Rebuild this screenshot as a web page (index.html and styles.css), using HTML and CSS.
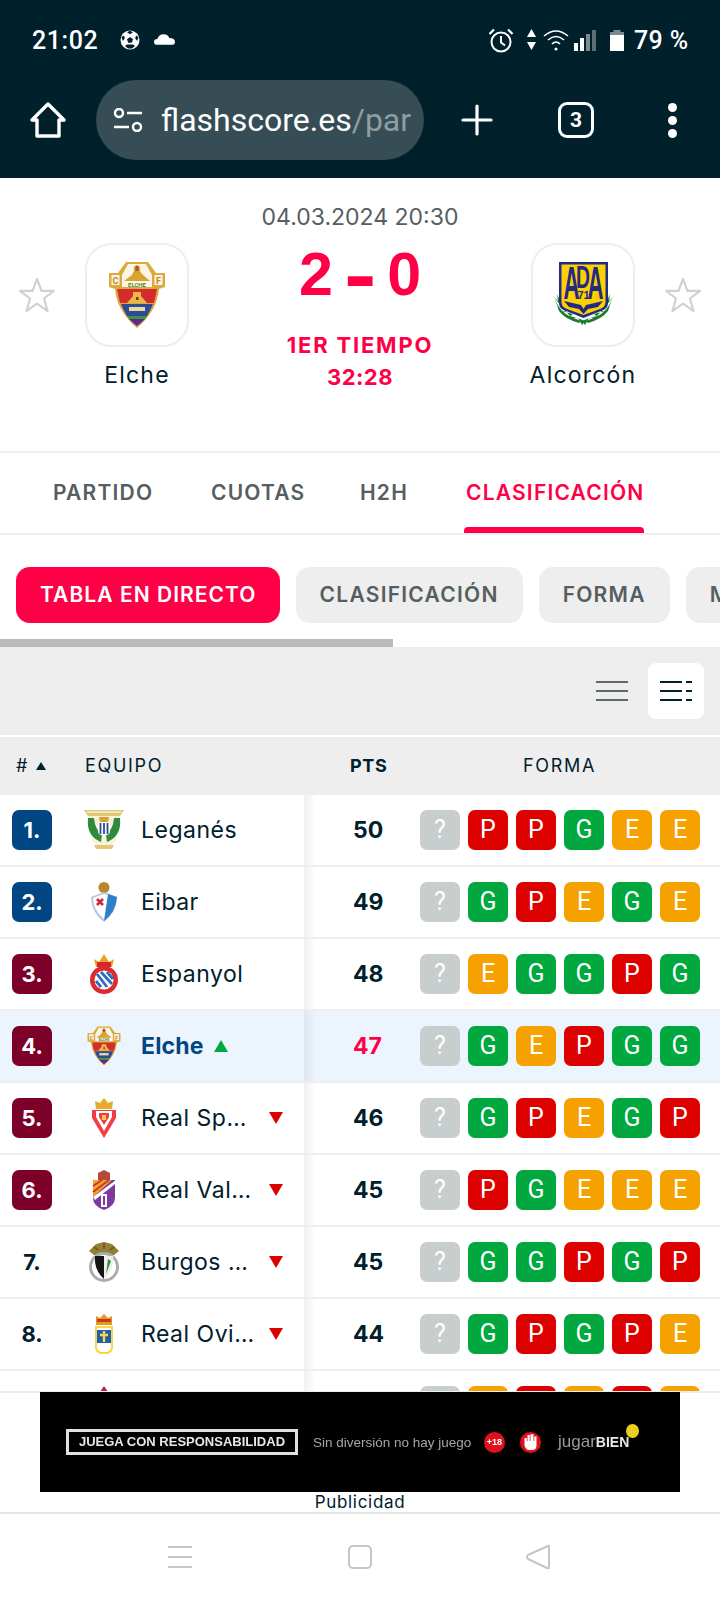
FILE: index.html
```html
<!DOCTYPE html>
<html lang="es">
<head>
<meta charset="utf-8">
<title>Elche - Alcorcón</title>
<link rel="stylesheet" href="styles.css">
</head>
<body>
<svg class="defs" aria-hidden="true">
  <symbol id="elche" viewBox="0 0 56 68">
    <path d="M17 1H39L47 12H56V26L50 28Q48 50 28 67Q8 50 6 28L0 26V12H9Z" fill="#dcaa3c"/>
    <path d="M19 3H37L43 14V26H13V14Z" fill="#fbf6e2"/>
    <rect x="2.500" y="14" width="8" height="10" fill="#fbf6e2"/>
    <rect x="45.500" y="14" width="8" height="10" fill="#fbf6e2"/>
    <path d="M28 4Q32 5 31 10L33 13L41 20H15L23 14L25 10Q24 5 28 4Z" fill="#d9a233"/>
    <path d="M26.500 5h3v5h-3z" fill="#b5502a"/>
    <text x="28" y="26" class="cr-elche">ELCHE</text>
    <text x="6.500" y="23" class="cr-cf">C</text>
    <text x="49.500" y="23" class="cr-cf">F</text>
    <path d="M8 28H48L45 42H11Z" fill="#d62b2c"/>
    <path d="M18 42L24 35V31H32V35L38 42Z" fill="#e8b949"/>
    <path d="M27 36h2.500v3H27z" fill="#a32020"/>
    <path d="M12 43H44Q41 50 38 55H18Q15 50 12 43Z" fill="#2b4c94"/>
    <path d="M20 50V46H36V50Z" fill="#ecd9a0"/>
    <path d="M18 55H38L36 58H20Z" fill="#3f8f46"/>
    <path d="M20 58H36Q32 62 28 65Q24 62 20 58Z" fill="#5a2a8f"/>
  </symbol>
  <symbol id="ada" viewBox="0 0 65 68">
    <path d="M2 35L7 40L6 33L10 42L14 46L20 50L11 50L22 53L17 57L27 57L31 64L34 60L29 58L19 55L11 46Z" fill="#1d7a2a"/>
    <path d="M63 35L58 40L59 33L55 42L51 46L45 50L54 50L43 53L48 57L38 57L34 64L31 60L36 58L46 55L54 46Z" fill="#1d7a2a"/>
    <path d="M4 38Q8 50 20 56L30 60L28 62Q14 58 8 50Z" fill="#1d7a2a"/>
    <path d="M61 38Q57 50 45 56L35 60L37 62Q51 58 57 50Z" fill="#1d7a2a"/>
    <path d="M8 1H57V42Q57 48 50 50L32.500 57L15 50Q8 48 8 42Z" fill="#232a82"/>
    <path d="M10.500 3.500H54.500V41Q54.500 46 49 48L32.500 54L16 48Q10.500 46 10.500 41Z" fill="#fdd000"/>
    <text x="12.500" y="38" class="cr-ada" textLength="16" lengthAdjust="spacingAndGlyphs">A</text>
    <text x="25" y="27" class="cr-ada cr-ada-d" textLength="14" lengthAdjust="spacingAndGlyphs">D</text>
    <text x="36.500" y="38" class="cr-ada" textLength="16" lengthAdjust="spacingAndGlyphs">A</text>
    <text x="32.500" y="38" class="cr-71">71</text>
    <path d="M13 40L30 44L32.500 48L35 44L52 40L47 46L37 48L32.500 53L28 48L18 46Z" fill="#232a82"/>
  </symbol>
</svg>
<div class="page">
  <header class="chrome">
    <div class="status">
      <span class="clock">21:02</span>
      <svg class="ic-ball" viewBox="0 0 20 20"><circle cx="10" cy="10" r="9.500" fill="#fff"/><path d="M10 7l3 2.200-1.200 3.600H8.200L7 9.200zM10 .8l3 1.500-3 2-3-2zM1.500 7l2.500-1.500.8 3-2 2.500zM18.500 7l-2.500-1.500-.8 3 2 2.500zM5 16l2-1.500h6l2 1.500-3 2.500H8z" fill="#00202c"/></svg>
      <svg class="ic-cloud" viewBox="0 0 22 11"><path d="M4 11Q0 11 0 8Q0 5 3.500 5Q5 0 10 0Q15 0 16 4Q22 4 22 8Q22 11 18 11Z" fill="#fff"/></svg>
      <span class="grow"></span>
      <svg class="ic-alarm" viewBox="0 0 26 25" fill="none" stroke="#fff"><circle cx="13" cy="14" r="9.500" stroke-width="2"/><path d="M13 8v6.500l4 3" stroke-width="2"/><path d="M1.500 6L6 1.500M24.500 6L20 1.500" stroke-width="2.200"/></svg>
      <svg class="ic-arrows" viewBox="0 0 9 21"><path d="M4.500 0L9 8H0zM0 13H9L4.500 21z" fill="#fff"/></svg>
      <svg class="ic-wifi" viewBox="0 0 26 22" fill="none" stroke="#fff" stroke-width="1.600"><path d="M1 7Q13 -3 25 7M5 11Q13 4 21 11M9 15Q13 11 17 15"/><circle cx="13" cy="20" r="1.500" fill="#fff" stroke="none"/></svg>
      <svg class="ic-signal" viewBox="0 0 23 21"><rect x="0" y="13" width="4" height="8" fill="#fff"/><rect x="6" y="8" width="4" height="13" fill="#fff"/><rect x="12" y="4" width="4" height="17" fill="#7d8b90"/><rect x="18" y="0" width="4" height="21" fill="#5d6e74"/></svg>
      <svg class="ic-batt" viewBox="0 0 14 21"><rect x="3.500" y="0" width="7" height="3" fill="#7d8b90"/><rect x="0" y="2" width="14" height="3" fill="#7d8b90"/><rect x="0" y="5" width="14" height="16" fill="#fff"/></svg>
      <span class="pct">79 %</span>
    </div>
    <div class="toolbar">
      <svg class="ic-home" viewBox="0 0 36 36" fill="none" stroke="#fff" stroke-width="3.400" stroke-linejoin="round"><path d="M18 2L34 18H29V34H7V18H2Z"/></svg>
      <div class="urlbar">
        <svg class="ic-tune" viewBox="0 0 30 24" fill="none" stroke="#fff" stroke-width="2.400"><circle cx="6" cy="5" r="4"/><path d="M14 5H29M1 19H16"/><circle cx="24" cy="19" r="4"/></svg>
        <span class="url">flashscore.es<span class="url-dim">/par</span></span>
      </div>
      <svg class="ic-plus" viewBox="0 0 32 32" fill="none" stroke="#fff" stroke-width="3.200" stroke-linecap="round"><path d="M16 2V30M2 16H30"/></svg>
      <span class="tabcount">3</span>
      <span class="dots"><i></i><i></i><i></i></span>
    </div>
  </header>

  <section class="match">
    <p class="date">04.03.2024 20:30</p>
    <div class="teams">
      <svg class="star" viewBox="0 0 36 36" fill="none" stroke="#cdd2d2" stroke-width="2.200" stroke-linejoin="round"><path d="M18 2L22.500 13.800H35L25 21.500L28.500 34L18 26.700L7.500 34L11 21.500L1 13.800H13.500Z"/></svg>
      <div class="team">
        <div class="teamlogo"><svg class="crest-elche"><use href="#elche"/></svg></div>
        <span class="teamname">Elche</span>
      </div>
      <div class="center">
        <div class="score"><span>2</span><span class="dash">-</span><span>0</span></div>
        <div class="stage">1ER TIEMPO</div>
        <div class="stage-time">32:28</div>
      </div>
      <div class="team">
        <div class="teamlogo"><svg class="crest-ada"><use href="#ada"/></svg></div>
        <span class="teamname">Alcorcón</span>
      </div>
      <svg class="star" viewBox="0 0 36 36" fill="none" stroke="#cdd2d2" stroke-width="2.200" stroke-linejoin="round"><path d="M18 2L22.500 13.800H35L25 21.500L28.500 34L18 26.700L7.500 34L11 21.500L1 13.800H13.500Z"/></svg>
    </div>
  </section>

  <nav class="tabs">
    <span class="tab tab-partido">PARTIDO</span>
    <span class="tab tab-cuotas">CUOTAS</span>
    <span class="tab tab-h2h">H2H</span>
    <span class="tab tab-active">CLASIFICACIÓN</span>
  </nav>

  <div class="filters">
    <span class="pill pill-on">TABLA EN DIRECTO</span>
    <span class="pill">CLASIFICACIÓN</span>
    <span class="pill">FORMA</span>
    <span class="pill pill-cut">M</span>
  </div>
  <div class="scrolltrack"><div class="scrollthumb"></div></div>

  <div class="viewbar">
    <svg class="ic-lines" viewBox="0 0 32 20"><path d="M0 1H32M0 10H32M0 19H32" stroke="#5f686b" stroke-width="2"/></svg>
    <span class="viewbtn"><svg class="ic-lines" viewBox="0 0 32 20"><path d="M0 1H22M26 1H32M0 10H22M26 10H32M0 19H22M26 19H32" stroke="#00202c" stroke-width="2"/></svg></span>
  </div>

  <div class="thead">
    <div class="th-left"><span class="th-hash"># <i class="sort"></i></span><span class="th-team">EQUIPO</span></div>
    <div class="th-right"><span class="th-pts">PTS</span><span class="th-form">FORMA</span></div>
  </div>

  <main class="rows">
    <div class="row">
      <div class="left"><span class="rank blue">1.</span>
        <svg class="crest" viewBox="0 0 40 40"><path d="M0 0H40L36 6H4Z" fill="#e0c878"/><path d="M3 2H37" stroke="#fff" stroke-width="1"/><path d="M5 6H35L32 31L20 40L8 31Z" fill="#f6f2dc"/><path d="M4 8Q2 26 17 32L18 24Q11 20 10 8Z" fill="#2f8a3c"/><path d="M36 8Q38 26 23 32L22 24Q29 20 30 8Z" fill="#2f8a3c"/><rect x="14" y="12" width="12" height="13" rx="4" fill="#fff"/><path d="M16.500 13v11M20 13v11M23.500 13v11" stroke="#2b4c94" stroke-width="1.800"/><path d="M15 7h10l-1 5h-8z" fill="#d9a233"/><path d="M10 35H30L28 39H12Z" fill="#e0c878"/></svg>
        <span class="name">Leganés</span></div>
      <div class="right"><span class="pts">50</span><span class="form"><b class="q">?</b><b class="p">P</b><b class="p">P</b><b class="g">G</b><b class="e">E</b><b class="e">E</b></span></div>
    </div>
    <div class="row">
      <div class="left"><span class="rank blue">2.</span>
        <svg class="crest" viewBox="0 0 40 40"><circle cx="20" cy="5.500" r="5.500" fill="#b8862d"/><path d="M7 15L20 10L33 15Q33 30 20 40Q7 30 7 15Z" fill="#bcc6dc"/><path d="M9 16L20 12L31 15Q31 28 20 37Q9 28 9 16Z" fill="#fff"/><path d="M33 15Q32 30 20 39L24 12Z" fill="#2f7fc9"/><path d="M13 17l6 6M19 17l-6 6" stroke="#d0263a" stroke-width="2.600"/></svg>
        <span class="name">Eibar</span></div>
      <div class="right"><span class="pts">49</span><span class="form"><b class="q">?</b><b class="g">G</b><b class="p">P</b><b class="e">E</b><b class="g">G</b><b class="e">E</b></span></div>
    </div>
    <div class="row">
      <div class="left"><span class="rank wine">3.</span>
        <svg class="crest" viewBox="0 0 40 40"><path d="M10 5L15 8L20 0L25 8L30 5L28 13H12Z" fill="#e8a420"/><path d="M13 8h14v5H13z" fill="#d6262b"/><circle cx="20" cy="26" r="14" fill="#dd2a2e"/><circle cx="20" cy="26" r="9.500" fill="#fff"/><path d="M13 20L23 33M17 18L28 30M12 27L17 33M23 18L29 25" stroke="#2c6bbd" stroke-width="2.800"/></svg>
        <span class="name">Espanyol</span></div>
      <div class="right"><span class="pts">48</span><span class="form"><b class="q">?</b><b class="e">E</b><b class="g">G</b><b class="g">G</b><b class="p">P</b><b class="g">G</b></span></div>
    </div>
    <div class="row row-me">
      <div class="left"><span class="rank wine">4.</span>
        <svg class="crest crest-mine"><use href="#elche"/></svg>
        <span class="name name-me">Elche</span><i class="up"></i></div>
      <div class="right"><span class="pts pts-me">47</span><span class="form"><b class="q">?</b><b class="g">G</b><b class="e">E</b><b class="p">P</b><b class="g">G</b><b class="g">G</b></span></div>
    </div>
    <div class="row">
      <div class="left"><span class="rank wine">5.</span>
        <svg class="crest" viewBox="0 0 40 40"><path d="M11 3L16 5L20 0L24 5L29 3L28 11H12Z" fill="#e5ab2a"/><path d="M8 12H32V20L20 40L8 20Z" fill="#ef3e46"/><path d="M12 13H28V19L20 33L12 19Z" fill="#fff"/><path d="M15 15H25V19L20 27L15 19Z" fill="#ef3e46"/><path d="M18 17h4v5h-4z" fill="#f3c74a"/></svg>
        <span class="name">Real Sporting</span><i class="down"></i></div>
      <div class="right"><span class="pts">46</span><span class="form"><b class="q">?</b><b class="g">G</b><b class="p">P</b><b class="e">E</b><b class="g">G</b><b class="p">P</b></span></div>
    </div>
    <div class="row">
      <div class="left"><span class="rank wine">6.</span>
        <svg class="crest" viewBox="0 0 40 40"><path d="M14 3L20 0L26 3V10H14Z" fill="#b24a3a"/><path d="M9 10H31V28Q31 36 20 40Q9 36 9 28Z" fill="#7a3b9c"/><path d="M9 10H28L9 27Z" fill="#f0a824"/><path d="M9 16L18 10M9 22L25 10" stroke="#d6322c" stroke-width="2"/><path d="M9 27L32 10L31 14L11 30Z" fill="#fff"/><path d="M17 24H23V37H17Z" fill="#fff"/><path d="M19 26h2v9h-2z" fill="#7a3b9c"/></svg>
        <span class="name">Real Valladolid</span><i class="down"></i></div>
      <div class="right"><span class="pts">45</span><span class="form"><b class="q">?</b><b class="p">P</b><b class="g">G</b><b class="e">E</b><b class="e">E</b><b class="e">E</b></span></div>
    </div>
    <div class="row">
      <div class="left"><span class="rank">7.</span>
        <svg class="crest" viewBox="0 0 40 40"><path d="M5 9L12 2L20 0L28 2L35 9L30 13H10Z" fill="#8b8434"/><path d="M10 5l4 3M30 5l-4 3M20 1v6" stroke="#a6402c" stroke-width="2"/><circle cx="20" cy="25" r="15" fill="#a9adab"/><circle cx="20" cy="25" r="12" fill="#fff"/><path d="M11 14H20V37Q12 30 11 20Z" fill="#141414"/><path d="M20 14H29V20Q28 30 20 37Z" fill="#eef0ee"/><path d="M24 17L27 19L22 32Z" fill="#2c8f4a"/></svg>
        <span class="name">Burgos CF</span><i class="down"></i></div>
      <div class="right"><span class="pts">45</span><span class="form"><b class="q">?</b><b class="g">G</b><b class="g">G</b><b class="p">P</b><b class="g">G</b><b class="p">P</b></span></div>
    </div>
    <div class="row">
      <div class="left"><span class="rank">8.</span>
        <svg class="crest" viewBox="0 0 40 40"><path d="M12 2L16 4L20 0L24 4L28 2L28 11H12Z" fill="#e59a1c"/><rect x="13" y="5" width="14" height="3" fill="#c9362a"/><path d="M11 12H29V33Q29 38 24 40H16Q11 38 11 33Z" fill="#f6d64a"/><path d="M13 14H27V33Q27 36 23 38H17Q13 36 13 33Z" fill="#fff"/><rect x="13" y="16" width="14" height="13" fill="#1f5fae"/><path d="M20 17v11M16 21h8" stroke="#f6d64a" stroke-width="2.400"/></svg>
        <span class="name">Real Oviedo</span><i class="down"></i></div>
      <div class="right"><span class="pts">44</span><span class="form"><b class="q">?</b><b class="g">G</b><b class="p">P</b><b class="g">G</b><b class="p">P</b><b class="e">E</b></span></div>
    </div>
    <div class="row">
      <div class="left"><span class="rank">9.</span>
        <svg class="crest" viewBox="0 0 40 40"><path d="M20 0L24 6H16Z" fill="#b3243a"/><rect x="12" y="6" width="16" height="30" fill="#b3243a"/></svg>
        <span class="name">Racing</span></div>
      <div class="right"><span class="pts">43</span><span class="form"><b class="q">?</b><b class="e">E</b><b class="p">P</b><b class="e">E</b><b class="p">P</b><b class="e">E</b></span></div>
    </div>
  </main>

  <aside class="adwrap">
    <div class="ad">
      <span class="ad-box">JUEGA CON RESPONSABILIDAD</span>
      <span class="ad-slogan">Sin diversión no hay juego</span>
      <span class="ad-18">+18</span>
      <span class="ad-hand"><svg viewBox="0 0 14 14" class="ad-handic"><path d="M3 7V4h1.500v2h.5V2h1.500v4h.5V1.500H9V6h.5V3H11v6q0 3-3 3H6Q4 12 3 9Z" fill="#fff"/></svg></span>
      <span class="ad-jugar">jugar<b>BIEN</b></span>
      <span class="ad-dot"></span>
    </div>
    <div class="adlabel">Publicidad</div>
  </aside>

  <footer class="navbar">
    <svg class="nav-menu" viewBox="0 0 24 22"><path d="M0 1H24M0 11H24M0 21H24" stroke="#c6c6c6" stroke-width="2"/></svg>
    <svg class="nav-home" viewBox="0 0 24 24" fill="none"><rect x="1" y="1" width="22" height="22" rx="4" stroke="#c6c6c6" stroke-width="2"/></svg>
    <svg class="nav-back" viewBox="0 0 24 26" fill="none"><path d="M22 2Q23 1 23 3V23Q23 25 21 24L2 15Q0 13 2 11Z" stroke="#c6c6c6" stroke-width="2" stroke-linejoin="round"/></svg>
  </footer>
</div>
</body>
</html>
```

FILE: styles.css
```css
* { box-sizing: border-box; }
html, body { margin: 0; padding: 0; background: #fff; }
body { font-family: Inter, "Liberation Sans", sans-serif; color: #00202c; }
.defs { display: none; }
.page { width: 720px; height: 1600px; display: flex; flex-direction: column; overflow: hidden; position: relative; }

/* Android chrome */
.chrome { background: #00202c; color: #fff; flex: none; height: 178px; font-family: Roboto, sans-serif; }
.status { height: 80px; display: flex; align-items: center; padding: 0 32px 0 32px; }
.clock { font-size: 25px; font-weight: 500; letter-spacing: .6px; width: 66px; }
.ic-ball { width: 20px; height: 20px; margin-left: 22px; }
.ic-cloud { width: 21px; height: 11px; margin-left: 14px; margin-top: -2px; }
.grow { flex: 1; }
.ic-alarm { width: 26px; height: 25px; }
.ic-arrows { width: 9px; height: 21px; margin-left: 13px; margin-top: -2px; }
.ic-wifi { width: 26px; height: 22px; margin-left: 7px; }
.ic-signal { width: 23px; height: 21px; margin-left: 5px; }
.ic-batt { width: 14px; height: 21px; margin-left: 13px; }
.pct { font-size: 25px; font-weight: 500; margin-left: 10px; letter-spacing: .4px; width: 54px; white-space: nowrap; }
.toolbar { height: 98px; display: flex; align-items: flex-start; position: relative; }
.ic-home { width: 36px; height: 36px; margin: 22px 0 0 30px; flex: none; }
.urlbar { width: 328px; height: 80px; border-radius: 40px; background: #364d55; margin-left: 30px; display: flex; align-items: center; padding: 0 14px 0 17px; flex: none; }
.ic-tune { width: 30px; height: 24px; flex: none; }
.url { margin-left: 18px; font-size: 32px; white-space: nowrap; color: #fff; }
.url-dim { color: #8e9ea3; }
.ic-plus { width: 32px; height: 32px; margin: 24px 0 0 37px; flex: none; }
.tabcount { width: 36px; height: 36px; margin: 22px 0 0 65px; border: 3.500px solid #fff; border-radius: 9px; display: flex; align-items: center; justify-content: center; font-size: 21px; font-weight: 700; flex: none; }
.dots { display: flex; flex-direction: column; gap: 4px; margin: 23px 0 0 74px; flex: none; }
.dots i { width: 9px; height: 9px; border-radius: 50%; background: #fff; display: block; }

/* Match header */
.match { flex: none; height: 273px; background: #fff; padding-top: 25px; }
.date { margin: 0; text-align: center; font-size: 23px; line-height: 28px; color: #555e61; }
.teams { display: flex; align-items: flex-start; margin-top: 12px; padding: 0 19px; }
.star { width: 36px; height: 36px; flex: none; margin-top: 34px; }
.team { width: 150px; flex: none; display: flex; flex-direction: column; align-items: center; margin: 0 7px; }
.teamlogo { width: 104px; height: 104px; border: 2px solid #eeeeee; border-radius: 26px; display: flex; align-items: center; justify-content: center; }
.crest-elche { width: 56px; height: 68px; }
.crest-ada { width: 65px; height: 68px; }
.cr-elche { font: 700 6px Roboto, sans-serif; fill: #3c8f46; text-anchor: middle; }
.cr-cf { font: 700 9px Roboto, sans-serif; fill: #b8862d; text-anchor: middle; }
.cr-ada { font: 700 46px "Liberation Sans", sans-serif; fill: #232a82; }
.cr-ada-d { font-size: 31px; }
.cr-71 { font: 700 11px "Liberation Sans", sans-serif; fill: #232a82; text-anchor: middle; }
.teamname { font-size: 23px; line-height: 28px; margin-top: 14px; letter-spacing: 1.2px; color: #00202c; white-space: nowrap; }
.center { flex: 1; display: flex; flex-direction: column; align-items: center; color: #ff0046; }
.score { display: flex; align-items: center; gap: 17px; font: 700 61px/62px "Liberation Sans", sans-serif; }
.dash { transform: scale(1.6, 1.35); }
.stage { font-weight: 700; font-size: 22px; line-height: 30px; letter-spacing: 1.8px; margin-top: 25px; white-space: nowrap; }
.stage-time { font-weight: 700; font-size: 22px; line-height: 30px; letter-spacing: .5px; margin-top: 2px; }

/* Tabs */
.tabs { flex: none; height: 84px; border-top: 2px solid #eeeeee; border-bottom: 2px solid #eeeeee; display: flex; position: relative; padding-left: 53px; }
.tab { font-size: 21px; font-weight: 600; color: #555e61; line-height: 80px; letter-spacing: 1.2px; white-space: nowrap; }
.tab-partido { width: 158px; }
.tab-cuotas { width: 149px; }
.tab-h2h { width: 104px; }
.tab-active { color: #ff0046; position: relative; padding: 0 0 0 2px; }
.tab-active::after { content: ""; position: absolute; left: 0; right: 0; bottom: 0; height: 6px; background: #ff0046; border-radius: 4px 4px 0 0; }

/* Filters */
.filters { flex: none; height: 104px; padding: 32px 0 16px 16px; display: flex; gap: 16px; white-space: nowrap; overflow: hidden; }
.pill { flex: none; height: 56px; border-radius: 14px; background: #eeeeee; color: #555e61; font-size: 21px; font-weight: 600; line-height: 56px; padding: 0 24px; letter-spacing: 1.25px; }
.pill-on { background: #ff0046; color: #fff; padding: 0 23px 0 24px; letter-spacing: 1.05px; }
.pill-cut { width: 60px; }
.scrolltrack { flex: none; height: 8px; }
.scrollthumb { width: 393px; height: 8px; background: #bbbbbb; }

/* Table header */
.viewbar { flex: none; height: 88px; background: #eeeeee; display: flex; align-items: center; justify-content: flex-end; padding-right: 16px; }
.ic-lines { width: 32px; height: 20px; display: block; }
.viewbtn { width: 56px; height: 56px; background: #fff; border-radius: 8px; display: flex; align-items: center; justify-content: center; margin-left: 20px; }
.thead { flex: none; height: 58px; margin-top: 2px; background: #eeeeee; display: flex; align-items: center; font-size: 18px; letter-spacing: 1.7px; line-height: 54px; }
.th-left { width: 304px; display: flex; align-items: center; flex: none; }
.th-hash { width: 85px; padding-left: 16px; white-space: nowrap; letter-spacing: .6px; }
.sort { display: inline-block; width: 0; height: 0; border-left: 5px solid transparent; border-right: 5px solid transparent; border-bottom: 8px solid #00202c; margin-left: 2px; vertical-align: 2px; }
.th-right { display: flex; align-items: center; }
.th-pts { width: 168px; padding-left: 46px; font-weight: 700; letter-spacing: .6px; }
.th-form { padding-left: 51px; }

/* Rows */
.rows { flex: 1; min-height: 0; overflow: hidden; }
.row { height: 72px; display: flex; border-bottom: 2px solid #eeeeee; background: #fff; }
.row-me { background: #ecf4fd; }
.left { width: 304px; flex: none; display: flex; align-items: center; padding-left: 12px; }
.right { flex: 1; display: flex; align-items: center; background: linear-gradient(90deg, rgba(0, 0, 0, .06), rgba(0, 0, 0, 0) 12px); }
.rank { width: 40px; height: 40px; border-radius: 7px; display: flex; align-items: center; justify-content: center; font-size: 22px; font-weight: 700; flex: none; color: #00202c; }
.blue { background: #004682; color: #fff; }
.wine { background: #7c0028; color: #fff; }
.crest { width: 40px; height: 40px; margin-left: 32px; flex: none; }
.name { margin-left: 17px; font-size: 23px; letter-spacing: .5px; color: #00202c; max-width: 116px; white-space: nowrap; overflow: hidden; text-overflow: ellipsis; }
.name-me { font-weight: 700; color: #004682; letter-spacing: .2px; }
.up { width: 0; height: 0; border-left: 7.500px solid transparent; border-right: 7.500px solid transparent; border-bottom: 12px solid #00a83f; margin-left: 10px; }
.down { width: 0; height: 0; border-left: 7.500px solid transparent; border-right: 7.500px solid transparent; border-top: 12px solid #dc0000; margin-left: auto; margin-right: 21px; }
.pts { width: 116px; padding-left: 49px; font-size: 23px; font-weight: 700; color: #00202c; white-space: nowrap; display: block; }
.pts-me { color: #ff0046; }
.form { display: flex; gap: 8px; }
.form b { width: 40px; height: 40px; border-radius: 7px; display: flex; align-items: center; justify-content: center; color: #fff; font: 400 25px Roboto, sans-serif; padding-bottom: 2px; }
.q { background: #c8cdcd; }
.p { background: #dc0000; }
.g { background: #00a83f; }
.e { background: #f5a100; }

/* Ad */
.adwrap { flex: none; height: 123px; border-top: 2px solid #eeeeee; border-bottom: 2px solid #e6e6e6; background: #fff; position: relative; }
.ad { width: 640px; height: 100px; margin: -1px auto 0; background: #000; display: flex; align-items: center; padding-left: 26px; position: relative; }
.ad-box { width: 232px; height: 26px; border: 3px solid #e0e0e0; color: #e8e8e8; font: 700 13px/20px "Liberation Sans", sans-serif; text-align: center; white-space: nowrap; filter: blur(.6px); }
.ad-slogan { margin-left: 15px; width: 156px; color: #a5a5a5; font: 400 13.500px "Liberation Sans", sans-serif; white-space: nowrap; filter: blur(.6px); }
.ad-18 { margin-left: 15px; width: 21px; height: 21px; border-radius: 50%; background: #e0101e; color: #fff; font: 700 9px/21px "Liberation Sans", sans-serif; text-align: center; filter: blur(.5px); }
.ad-hand { margin-left: 15px; width: 21px; height: 21px; border-radius: 50%; background: #e0101e; display: flex; filter: blur(.5px); }
.ad-handic { width: 21px; height: 21px; }
.ad-jugar { margin-left: 17px; color: #9a9a9a; font: 400 17px "Liberation Sans", sans-serif; white-space: nowrap; filter: blur(.6px); }
.ad-jugar b { color: #e8e8e8; font-size: 14px; }
.ad-dot { width: 13px; height: 14px; border-radius: 50%; background: #e8d020; margin-left: -3px; margin-top: -22px; filter: blur(.5px); }
.adlabel { text-align: center; font-size: 17px; line-height: 20px; letter-spacing: .7px; color: #00202c; }

/* Navigation */
.navbar { flex: none; height: 86px; background: #fff; display: flex; align-items: center; position: relative; padding: 0 0 0 168px; }
.nav-menu { width: 24px; height: 22px; flex: none; }
.nav-home { width: 24px; height: 24px; margin-left: 156px; flex: none; }
.nav-back { width: 24px; height: 26px; margin-left: 154px; flex: none; }
```
